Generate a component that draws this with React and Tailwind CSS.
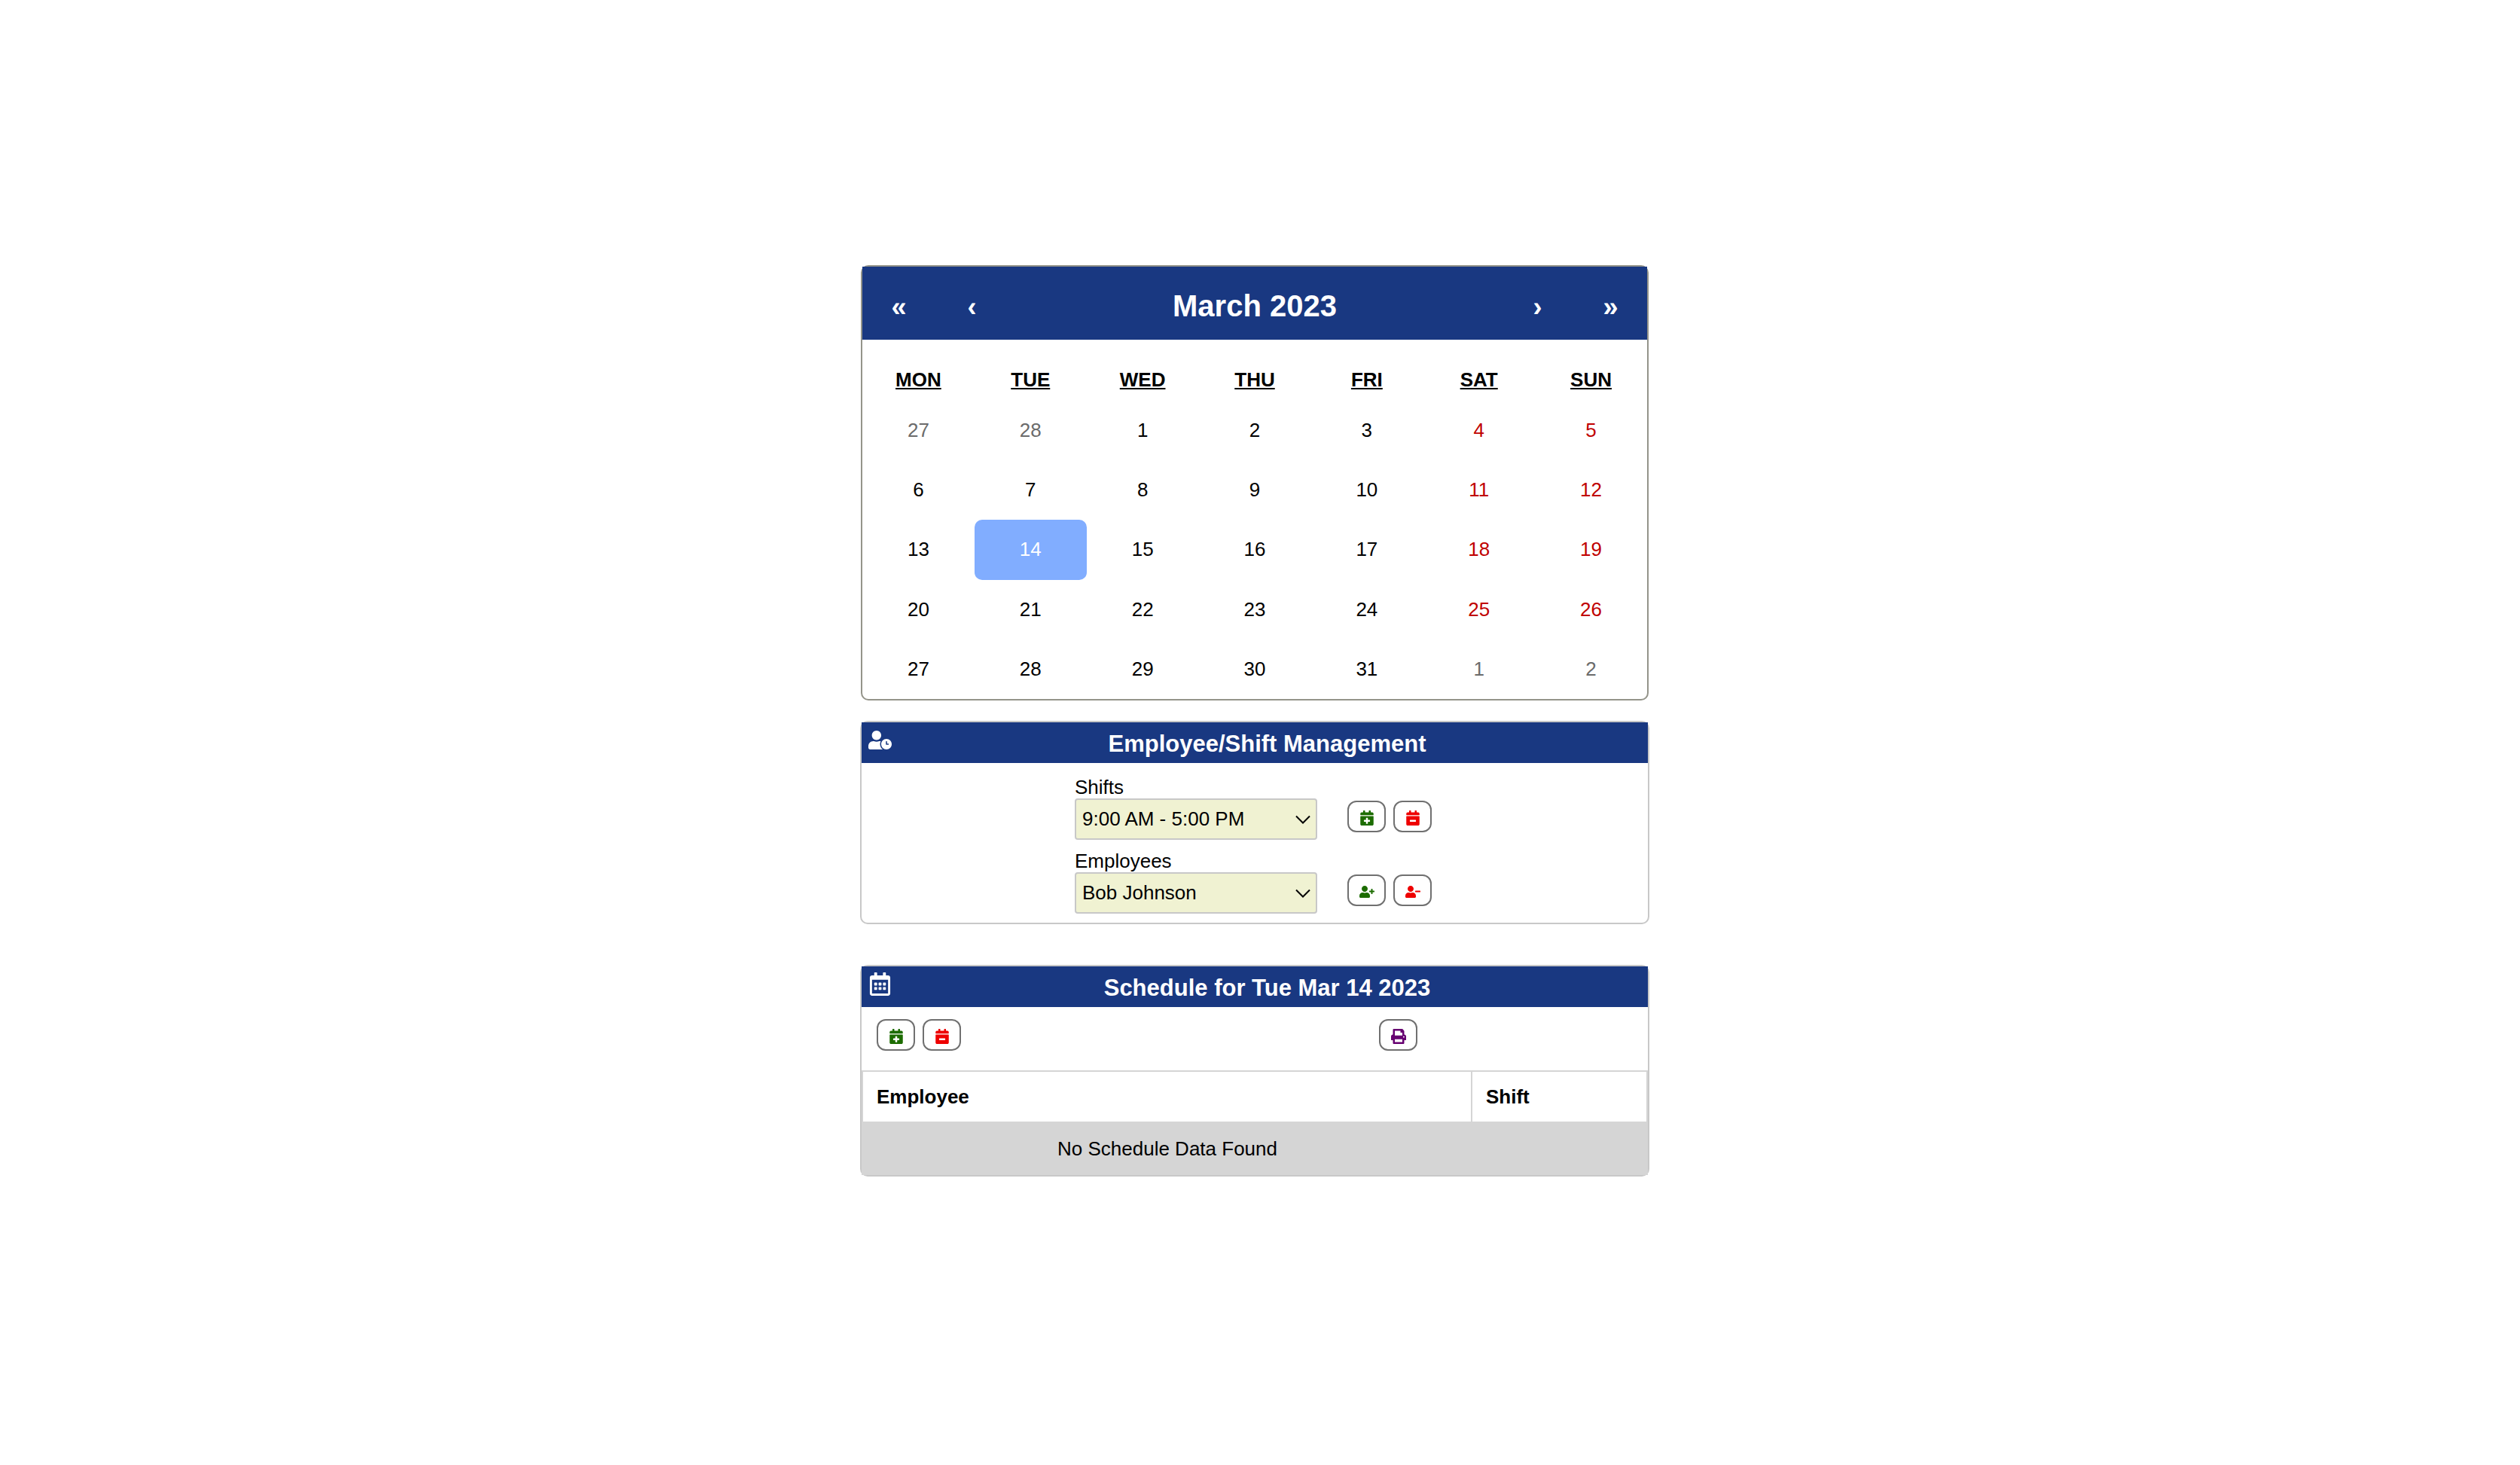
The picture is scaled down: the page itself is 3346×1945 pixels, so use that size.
import { useState } from "react";
import {
  FaCalendarMinus,
  FaCalendarPlus,
  FaPrint,
  FaRegCalendarAlt,
  FaUserClock,
  FaUserMinus,
  FaUserPlus,
} from "react-icons/fa";

const weekdays = ["MON", "TUE", "WED", "THU", "FRI", "SAT", "SUN"];
const days = [
  27, 28, 1, 2, 3, 4, 5, 6, 7, 8, 9, 10, 11, 12, 13, 14, 15, 16, 17, 18, 19, 20,
  21, 22, 23, 24, 25, 26, 27, 28, 29, 30, 31, 1, 2,
];

function dayColor(index, selected) {
  if (index === selected) return "rounded-[10px] bg-[#81adff] text-white";
  if (index < 2 || index > 32) return "text-[#6b6b6b]";
  return index % 7 > 4 ? "text-[#c00000]" : "text-black";
}

function NavButton({ label, children }) {
  return (
    <button type="button" aria-label={label} className="w-[97px] cursor-pointer text-[36px]">
      {children}
    </button>
  );
}

function Calendar() {
  const [selected, setSelected] = useState(15);
  return (
    <section className="mx-px rounded-[10px] border-2 border-[#94948a]">
      <div className="flex items-baseline bg-[#193881] pt-[22px] pb-[13px] text-[40px] leading-[60px] font-bold text-white">
        <NavButton label="Previous year">«</NavButton>
        <NavButton label="Previous month">‹</NavButton>
        <h1 className="grow text-center">March 2023</h1>
        <NavButton label="Next month">›</NavButton>
        <NavButton label="Next year">»</NavButton>
      </div>
      <div className="grid grid-cols-7 pt-[38px] pb-[13px] text-center leading-[30px] font-bold underline">
        {weekdays.map((day) => (
          <div key={day}>{day}</div>
        ))}
      </div>
      <div className="grid h-[396px] grid-cols-7 grid-rows-5">
        {days.map((day, i) => (
          <button
            key={i}
            type="button"
            onClick={() => setSelected(i)}
            className={`cursor-pointer ${dayColor(i, selected)}`}
          >
            {day}
          </button>
        ))}
      </div>
    </section>
  );
}

function Panel({ icon: Icon, title, className, children }) {
  return (
    <section className={`rounded-[10px] border-2 border-[#c8c8c8] ${className}`}>
      <header className="flex bg-[#193881] text-white">
        <Icon className="mt-2 ml-[9px] size-[31px]" aria-hidden="true" />
        <h2 className="grow pt-1 pr-[7px] text-center text-[31px] leading-[50px] font-bold">{title}</h2>
      </header>
      {children}
    </section>
  );
}

function IconButton({ icon: Icon, label, color }) {
  return (
    <button
      type="button"
      aria-label={label}
      className="flex h-[42px] w-[51px] cursor-pointer items-center justify-center rounded-xl border-2 border-[#707070] pt-1"
    >
      <Icon className={`size-5 ${color}`} aria-hidden="true" />
    </button>
  );
}

function SelectField({ id, label, options, children }) {
  return (
    <div className="flex items-end gap-10">
      <div>
        <label htmlFor={id} className="block leading-[30px]">
          {label}
        </label>
        <div className="grid items-center">
          <select
            id={id}
            className="col-start-1 row-start-1 h-[55px] w-[322px] appearance-none rounded-[4px] border-2 border-[#c8c8c8] bg-[#f0f2d2] px-2"
          >
            {options.map((option) => (
              <option key={option}>{option}</option>
            ))}
          </select>
          <svg
            viewBox="0 0 20 12"
            className="pointer-events-none col-start-1 row-start-1 mr-[9px] h-3 w-5 justify-self-end"
            fill="none"
            stroke="black"
            strokeWidth="2"
            aria-hidden="true"
          >
            <path d="M1 1.5 10 10.5 19 1.5" />
          </svg>
        </div>
      </div>
      <div className="flex gap-[10px] pb-[10px]">{children}</div>
    </div>
  );
}

export default function App() {
  return (
    <div
      className="pt-[352px] pr-[14px] text-[26px] text-black"
      style={{ fontFamily: '"Liberation Sans", Arial, sans-serif' }}
    >
      <main className="mx-auto max-w-[1048px]">
        <Calendar />

        <Panel icon={FaUserClock} title="Employee/Shift Management" className="mt-[27px]">
          <div className="flex flex-col items-center gap-[13px] pt-[17px] pr-1 pb-3">
            <SelectField id="shifts" label="Shifts" options={["9:00 AM - 5:00 PM"]}>
              <IconButton icon={FaCalendarPlus} label="Add shift" color="text-[#1c6c00]" />
              <IconButton icon={FaCalendarMinus} label="Remove shift" color="text-[#ee0000]" />
            </SelectField>
            <SelectField id="employees" label="Employees" options={["Bob Johnson"]}>
              <IconButton icon={FaUserPlus} label="Add employee" color="text-[#1c6c00]" />
              <IconButton icon={FaUserMinus} label="Remove employee" color="text-[#ee0000]" />
            </SelectField>
          </div>
        </Panel>

        <Panel icon={FaRegCalendarAlt} title="Schedule for Tue Mar 14 2023" className="mt-[54px]">
          <div className="flex justify-between pt-4 pr-[306px] pb-[26px] pl-5">
            <div className="flex gap-[10px]">
              <IconButton icon={FaCalendarPlus} label="Add to schedule" color="text-[#1c6c00]" />
              <IconButton icon={FaCalendarMinus} label="Remove from schedule" color="text-[#ee0000]" />
            </div>
            <IconButton icon={FaPrint} label="Print schedule" color="text-[#660070]" />
          </div>
          <table className="w-full border-collapse">
            <thead>
              <tr className="text-left">
                <th className="h-[68px] border-2 border-[#d5d5d5] px-[18px]">Employee</th>
                <th className="w-[233px] border-2 border-[#d5d5d5] px-[18px]">Shift</th>
              </tr>
            </thead>
            <tbody>
              <tr className="bg-[#d5d5d5] text-center">
                <td className="h-[70px] border-l-2 border-[#d5d5d5]">No Schedule Data Found</td>
                <td className="border-r-2 border-[#d5d5d5]" />
              </tr>
            </tbody>
          </table>
        </Panel>
      </main>
    </div>
  );
}
